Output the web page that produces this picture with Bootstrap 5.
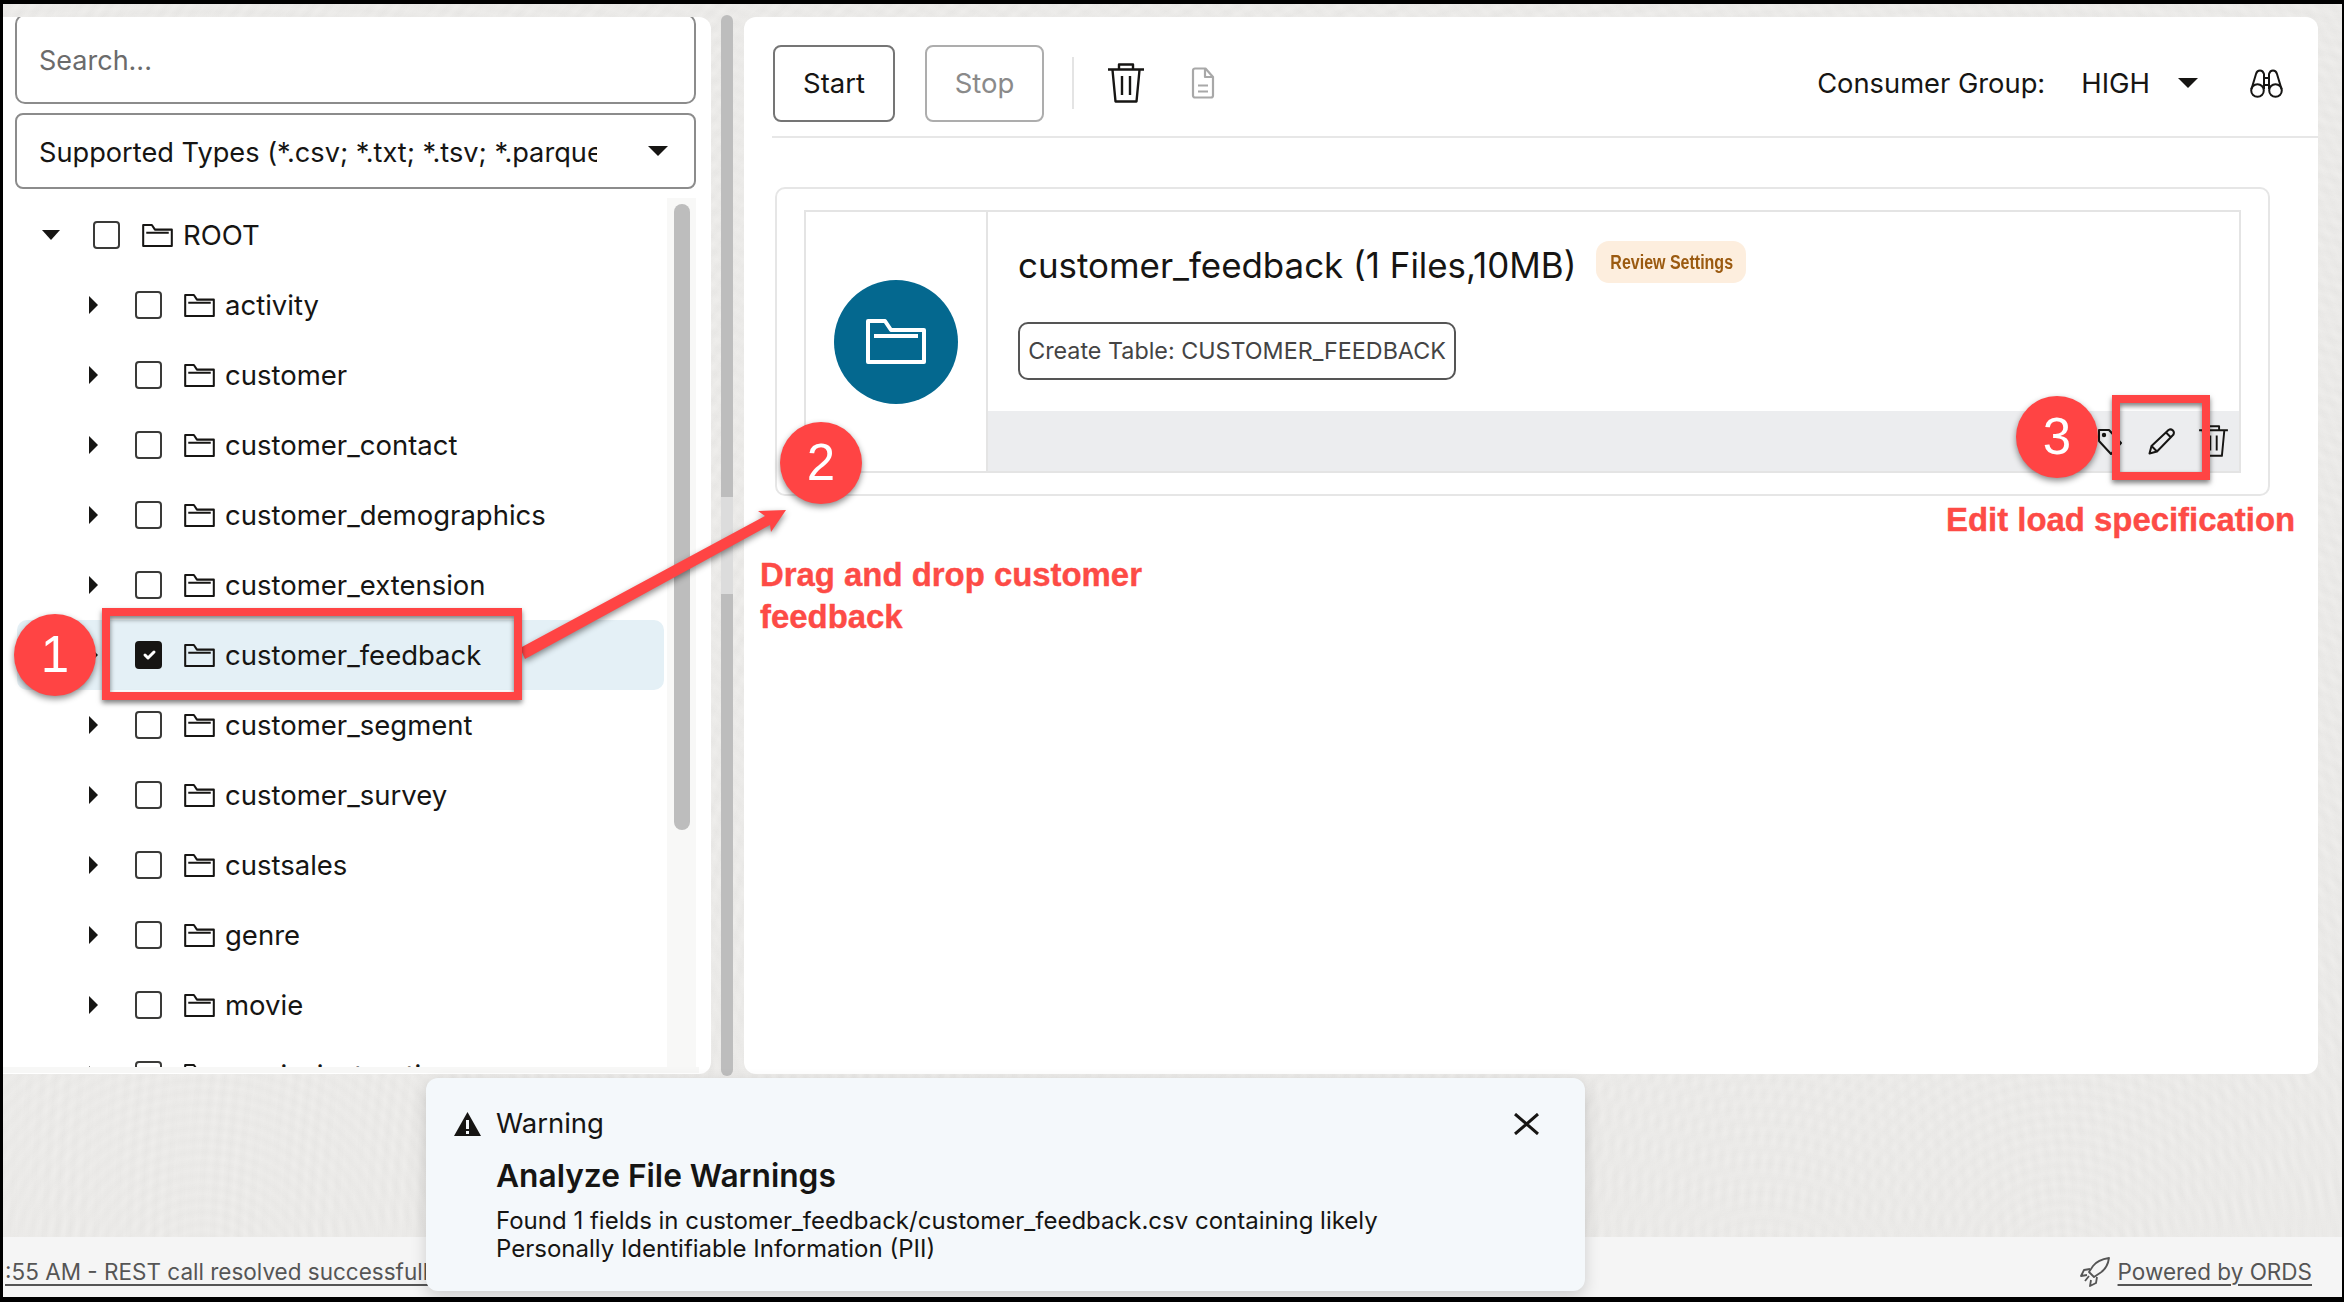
<!DOCTYPE html>
<html lang="en">
<head>
<meta charset="utf-8">
<title>Data Load</title>
<link href="https://cdn.jsdelivr.net/npm/bootstrap@5.3.0/dist/css/bootstrap.min.css" rel="stylesheet">
<style>
html,body{margin:0;background:#000}
body{position:relative;width:2344px;height:1302px;overflow:hidden;font-family:Inter,"Liberation Sans",sans-serif;color:#161513}
.app-frame{margin:4px 2px 0 3px;height:1293px;overflow:hidden;background-color:#eeedeb;
 background-image:
 repeating-radial-gradient(circle at 2059px 1270px,rgba(0,0,0,.012),rgba(0,0,0,0) 6px,rgba(0,0,0,.012) 12px),
 repeating-radial-gradient(circle at 1760px 1300px,rgba(0,0,0,.008),rgba(0,0,0,0) 7px,rgba(0,0,0,.008) 14px),
 repeating-radial-gradient(circle at 200px 1280px,rgba(0,0,0,.01),rgba(0,0,0,0) 6px,rgba(0,0,0,.01) 12px)}
.work-row{height:1070px;padding:13px 24px 0 0}
.left-pane{width:708px;background:#fff;border-radius:0 12px 12px 0;overflow:hidden;padding-left:12px}
.search-box.form-control{height:90px;margin-top:-3px;margin-right:15px;width:681px;border:2px solid #8c8c8c;border-radius:10px;font-size:27px;padding:2px 22px 0;color:#161513;font-family:inherit}
.search-box::placeholder{color:#6b6b6b}
.type-box.form-select{height:76px;width:681px;margin-top:9px;border:2px solid #8c8c8c;border-radius:8px;background-image:none;font-size:27.2px;padding:0 26px 0 22px;color:#161513}
.type-text{width:558px;overflow:hidden;white-space:nowrap;padding-top:5px}
.tree-wrap{height:869px;margin-top:9px;width:681px}
.tree-list{width:652px;padding-top:2px;overflow:hidden}
.tree-row{height:70px;margin:0 3px 0 2px;padding-left:72px;font-size:27.5px;border-radius:10px;white-space:nowrap}
.tree-row.is-root{padding-left:25px}
.tree-row.is-on{background:#e4f0f6}
.caret-cell{width:46px;flex:none}
.is-root .caret-cell{width:51px}
.tree-check.form-check-input{width:27px;height:28px;margin:0 22px 0 0;flex:none;border:2px solid #3a3a38;border-radius:4px;background-color:#fff}
.tree-check.form-check-input:checked{background-color:#161513;border-color:#161513;background-size:85%;opacity:1}
.folder-sm{width:31px;height:23px;margin-right:10px;flex:none}
.tree-label{padding-top:2px}
.tree-track{width:29px;background:#f8f8f7;padding:6px 6px 0 7px}
.tree-thumb{height:626px;background:#bdbdbd;border-radius:8px}
.pane-band{height:6px;width:696px;margin-left:-12px;background:#f7f7f6}
.split-col{width:33px;margin:-2px 0 -3px;padding-left:10px}
.split-seg{width:12px;background:#bdbdbd}
.split-a{height:482px;border-radius:6px 6px 0 0}
.split-b{height:97px;background:#dcdcdc}
.split-c{height:482px;border-radius:0 0 6px 6px}
.right-pane{width:1574px;background:#fff;border-radius:12px;padding-left:28px}
.tool-strip{height:121px;padding:28px 35px 15px 1px;border-bottom:2px solid #e7e7e7}
.tool-btn.btn{height:77px;border:2px solid #757575;border-radius:8px;background:#fff;font-size:27.5px;color:#161513;padding:2px 0 0;width:122px}
.tool-btn.btn:disabled{color:#8a8a8a;border-color:#adadad;opacity:1;width:119px;margin-left:30px}
.tool-sep{width:2px;height:52px;background:#e4e4e4;margin:0 34px 0 28px}
.icon-bin{width:36px;height:40px;margin-right:47px}
.icon-doc{width:24px;height:32px;color:#a8a8a8}
.group-label{font-size:27.3px;margin-right:36px;padding-top:2px}
.group-val{font-size:27.5px;margin-right:28px;padding-top:2px}
.group-caret{width:20px;height:10px;margin-right:52px}
.icon-bino{width:33px;height:29px}
.job-card.card{margin:49px 0 0 3px;width:1495px;height:309px;border:2px solid #e6e6e6;border-radius:10px;padding:21px 27px}
.job-inner{height:263px;border:2px solid #e4e4e4}
.job-side{width:182px;border-right:2px solid #e4e4e4;flex:none}
.job-disc{width:124px;height:124px;background:#04688f;border-radius:50%;color:#fff}
.job-disc svg{width:60px;height:45px}
.job-main{min-width:0}
.job-body{height:199px;padding:29px 0 0 30px}
.title-row{height:42px}
.job-title{font-size:34.9px;margin:0;padding-top:3px;font-weight:400;line-height:42px;white-space:nowrap}
.rev-tag{margin-left:20px;width:150px;height:42px;flex:none;background:#fdeede;border-radius:13px;color:#9b5a10;font:700 20px "Liberation Sans",sans-serif;white-space:nowrap}
.rev-tag span{display:inline-block;transform:scaleX(.8)}
.table-btn.btn{margin-top:39px;height:58px;width:438px;border:2px solid #555;border-radius:10px;background:#fff;color:#444;font-size:23.3px;padding:0;white-space:nowrap}
.job-foot{height:60px;background:#ecedef;padding-right:11px}
.i-tag{width:24px;height:27px;margin-right:26px}
.i-pen{width:28px;height:28px;margin-right:23px}
.i-bin{width:29px;height:32px}
.foot-space{height:163px}
.status-bar{height:60px;background:#f5f5f5;padding:10px 30px 0 2px;color:#555;font-size:22.5px}
.status-bar u{text-underline-offset:4px}
.i-rocket{width:30px;height:30px;margin-right:8px}
.warn-toast.toast{--bs-toast-max-width:none;position:absolute;left:426px;top:1078px;width:1159px;height:213px;background:#f4f8fb;border:0;border-radius:12px;box-shadow:0 6px 16px rgba(0,0,0,.16);padding:29px 46px 0 28px;font-size:24px;z-index:5}
.warn-head{height:34px;font-size:27.5px}
.warn-head .i-warn{width:27px;height:24px;margin-right:15px}
.i-close{width:25px;height:22px}
.warn-body{padding-left:42px}
.warn-title{font-size:31.7px;font-weight:600;margin:17px 0 13px;line-height:36px}
.warn-text{line-height:27.5px;margin:0;width:940px}
.mark-disc{position:absolute;width:82px;height:82px;border-radius:50%;background:#ff4444;color:#fff;font:400 51px/82px "Liberation Sans",sans-serif;text-align:center;box-shadow:0 3px 6px rgba(0,0,0,.45);z-index:7}
.mark-box{position:absolute;border:8px solid #ff4444;box-shadow:0 3px 5px rgba(0,0,0,.5),inset 0 3px 5px rgba(0,0,0,.5);z-index:6}
.mark-text{position:absolute;margin:0;color:#fd4b46;font:700 32.9px/42px "Liberation Sans",sans-serif;-webkit-text-stroke:.4px #fd4b46;z-index:7}
.mark-svg{position:absolute;left:0;top:0;z-index:6;filter:drop-shadow(0 3px 3px rgba(0,0,0,.45))}
.m-one{left:14px;top:614px}
.m-two{left:780px;top:422px}
.m-three{left:2016px;top:396px}
.b-one{left:102px;top:608px;width:420px;height:92px}
.b-three{left:2112px;top:395px;width:98px;height:85px}
.t-drag{left:760px;top:554px}
.t-edit{left:1946px;top:499px}
</style>
</head>
<body>
<svg width="0" height="0" class="d-block position-absolute">
 <symbol id="s-folder" viewBox="0 0 60 45"><path d="M2 2h17l6 9h33v32H2z M8 17H52" fill="none" stroke="currentColor" stroke-width="4" stroke-linejoin="round"/></symbol>
 <symbol id="s-bin" viewBox="0 0 36 40"><path d="M0 6.5H36M11 6V1.5H25V6M4.5 7 7.5 38.5H28.5L31.5 7M14 13V32M22 13V32" fill="none" stroke="currentColor" stroke-width="2.4" stroke-linejoin="round"/></symbol>
 <symbol id="s-right" viewBox="0 0 9 18"><path d="M0 0 9 9 0 18z" fill="#161513"/></symbol>
</svg>

<div class="app-frame d-flex flex-column">
 <div class="work-row d-flex">
  <div class="left-pane d-flex flex-column">
   <input class="search-box form-control" placeholder="Search...">
   <div class="type-box form-select d-flex align-items-center justify-content-between">
    <span class="type-text">Supported Types (*.csv; *.txt; *.tsv; *.parquet)</span>
    <svg width="20" height="10" viewBox="0 0 20 10"><path d="M0 0H20L10 10z" fill="#161513"/></svg>
   </div>
   <div class="tree-wrap d-flex">
    <div class="tree-list">
     <div class="tree-row is-root d-flex align-items-center"><span class="caret-cell"><svg class="d-block" width="18" height="10" viewBox="0 0 18 10"><path d="M0 0H18L9 10z" fill="#161513"/></svg></span><input class="tree-check form-check-input" type="checkbox" aria-label="ROOT"><svg class="folder-sm"><use href="#s-folder"/></svg><span class="tree-label">ROOT</span></div>
     <div class="tree-row d-flex align-items-center"><span class="caret-cell"><svg class="d-block" width="9" height="18"><use href="#s-right"/></svg></span><input class="tree-check form-check-input" type="checkbox" aria-label="activity"><svg class="folder-sm"><use href="#s-folder"/></svg><span class="tree-label">activity</span></div>
     <div class="tree-row d-flex align-items-center"><span class="caret-cell"><svg class="d-block" width="9" height="18"><use href="#s-right"/></svg></span><input class="tree-check form-check-input" type="checkbox" aria-label="customer"><svg class="folder-sm"><use href="#s-folder"/></svg><span class="tree-label">customer</span></div>
     <div class="tree-row d-flex align-items-center"><span class="caret-cell"><svg class="d-block" width="9" height="18"><use href="#s-right"/></svg></span><input class="tree-check form-check-input" type="checkbox" aria-label="customer_contact"><svg class="folder-sm"><use href="#s-folder"/></svg><span class="tree-label">customer_contact</span></div>
     <div class="tree-row d-flex align-items-center"><span class="caret-cell"><svg class="d-block" width="9" height="18"><use href="#s-right"/></svg></span><input class="tree-check form-check-input" type="checkbox" aria-label="customer_demographics"><svg class="folder-sm"><use href="#s-folder"/></svg><span class="tree-label">customer_demographics</span></div>
     <div class="tree-row d-flex align-items-center"><span class="caret-cell"><svg class="d-block" width="9" height="18"><use href="#s-right"/></svg></span><input class="tree-check form-check-input" type="checkbox" aria-label="customer_extension"><svg class="folder-sm"><use href="#s-folder"/></svg><span class="tree-label">customer_extension</span></div>
     <div class="tree-row is-on d-flex align-items-center"><span class="caret-cell"><svg class="d-block" width="9" height="18"><use href="#s-right"/></svg></span><input class="tree-check form-check-input" type="checkbox" checked aria-label="customer_feedback"><svg class="folder-sm"><use href="#s-folder"/></svg><span class="tree-label">customer_feedback</span></div>
     <div class="tree-row d-flex align-items-center"><span class="caret-cell"><svg class="d-block" width="9" height="18"><use href="#s-right"/></svg></span><input class="tree-check form-check-input" type="checkbox" aria-label="customer_segment"><svg class="folder-sm"><use href="#s-folder"/></svg><span class="tree-label">customer_segment</span></div>
     <div class="tree-row d-flex align-items-center"><span class="caret-cell"><svg class="d-block" width="9" height="18"><use href="#s-right"/></svg></span><input class="tree-check form-check-input" type="checkbox" aria-label="customer_survey"><svg class="folder-sm"><use href="#s-folder"/></svg><span class="tree-label">customer_survey</span></div>
     <div class="tree-row d-flex align-items-center"><span class="caret-cell"><svg class="d-block" width="9" height="18"><use href="#s-right"/></svg></span><input class="tree-check form-check-input" type="checkbox" aria-label="custsales"><svg class="folder-sm"><use href="#s-folder"/></svg><span class="tree-label">custsales</span></div>
     <div class="tree-row d-flex align-items-center"><span class="caret-cell"><svg class="d-block" width="9" height="18"><use href="#s-right"/></svg></span><input class="tree-check form-check-input" type="checkbox" aria-label="genre"><svg class="folder-sm"><use href="#s-folder"/></svg><span class="tree-label">genre</span></div>
     <div class="tree-row d-flex align-items-center"><span class="caret-cell"><svg class="d-block" width="9" height="18"><use href="#s-right"/></svg></span><input class="tree-check form-check-input" type="checkbox" aria-label="movie"><svg class="folder-sm"><use href="#s-folder"/></svg><span class="tree-label">movie</span></div>
     <div class="tree-row d-flex align-items-center"><span class="caret-cell"><svg class="d-block" width="9" height="18"><use href="#s-right"/></svg></span><input class="tree-check form-check-input" type="checkbox" aria-label="movie_instructions"><svg class="folder-sm"><use href="#s-folder"/></svg><span class="tree-label">movie_instructions</span></div>
    </div>
    <div class="tree-track"><div class="tree-thumb"></div></div>
   </div>
   <div class="pane-band"></div>
  </div>
  <div class="split-col">
   <div class="split-seg split-a"></div><div class="split-seg split-b"></div><div class="split-seg split-c"></div>
  </div>
  <div class="right-pane">
   <div class="tool-strip d-flex align-items-center">
    <button class="tool-btn btn" type="button">Start</button>
    <button class="tool-btn btn" type="button" disabled>Stop</button>
    <span class="tool-sep"></span>
    <svg class="icon-bin"><use href="#s-bin"/></svg>
    <svg class="icon-doc" viewBox="0 0 24 32" fill="none" stroke="currentColor" stroke-width="2.2" stroke-linejoin="round"><path d="M2 3.5a2 2 0 0 1 2-2H14.5L22 10V28.5a2 2 0 0 1-2 2H4a2 2 0 0 1-2-2zM14 2V10H22M7 18.5H17M7 24.5H17"/></svg>
    <span class="group-label ms-auto">Consumer Group:</span>
    <span class="group-val">HIGH</span>
    <svg class="group-caret" viewBox="0 0 20 10"><path d="M0 0H20L10 10z" fill="#161513"/></svg>
    <svg class="icon-bino" viewBox="0 0 33 29" fill="none" stroke="#161513" stroke-width="2" stroke-linejoin="round"><circle cx="7.5" cy="21.5" r="6.3"/><circle cx="25.5" cy="21.5" r="6.3"/><path d="M1.5 20 6 5Q7 1.5 10 1.5T14 5V20M31.5 20 27 5Q26 1.5 23 1.5T19 5V20M14 9H19M14 16H19"/></svg>
   </div>
   <div class="job-card card">
    <div class="job-inner d-flex">
     <div class="job-side d-flex align-items-center justify-content-center">
      <div class="job-disc d-flex align-items-center justify-content-center"><svg><use href="#s-folder"/></svg></div>
     </div>
     <div class="job-main flex-grow-1">
      <div class="job-body">
       <div class="title-row d-flex align-items-start">
        <h2 class="job-title">customer_feedback (1 Files,10MB)</h2>
        <span class="rev-tag d-flex align-items-center justify-content-center"><span>Review Settings</span></span>
       </div>
       <button class="table-btn btn" type="button">Create Table: CUSTOMER_FEEDBACK</button>
      </div>
      <div class="job-foot d-flex align-items-center justify-content-end">
       <svg class="i-tag" viewBox="0 0 24 27" fill="none" stroke="#161513" stroke-width="2" stroke-linejoin="round"><path d="M1 2H11L23 15 13 26 1 13z"/><circle cx="6" cy="7" r="1.2" fill="#161513"/></svg>
       <svg class="i-pen" viewBox="0 0 28 28" fill="none" stroke="#161513" stroke-width="2" stroke-linejoin="round"><path d="M1.5 26.5 3.5 19 20.5 3a3.5 3.5 0 0 1 5 4.5L9 24.5zM3.5 19 9 24.5M18 5.5 23 10.5"/></svg>
       <svg class="i-bin"><use href="#s-bin"/></svg>
      </div>
     </div>
    </div>
   </div>
  </div>
 </div>
 <div class="foot-space"></div>
 <div class="status-bar d-flex align-items-center justify-content-between">
  <u>:55 AM - REST call resolved successfully</u>
  <span class="d-flex align-items-center">
   <svg class="i-rocket" viewBox="0 0 30 30" fill="none" stroke="#555" stroke-width="1.8" stroke-linejoin="round"><path d="M29 1C22 2 16 5 13 9L9 15 14 20 20 16C25 13 28 8 29 1zM10 12 4 13 1 19 7 18M17 20 16 26 10 29 11 23M9 19 5 24"/></svg>
   <u>Powered by ORDS</u>
  </span>
 </div>
</div>

<div class="warn-toast toast show" role="alert">
 <div class="warn-head d-flex align-items-center">
  <svg class="i-warn" viewBox="0 0 27 24"><path fill-rule="evenodd" d="M13.5 0 27 24H0zM12 8v9h3V8zM12 19v3h3v-3z" fill="#161513"/></svg>
  <span>Warning</span>
  <svg class="i-close ms-auto" viewBox="0 0 25 22"><path d="M1 1 24 21M24 1 1 21" stroke="#161513" stroke-width="3" fill="none"/></svg>
 </div>
 <div class="warn-body">
  <h3 class="warn-title">Analyze File Warnings</h3>
  <p class="warn-text">Found 1 fields in customer_feedback/customer_feedback.csv containing likely Personally Identifiable Information (PII)</p>
 </div>
</div>

<svg class="mark-svg" width="2344" height="1302" viewBox="0 0 2344 1302"><path d="M520 648 765 516 758 511 786 510 771 532 770 525 525 659z" fill="#ff4444"/></svg>
<div class="mark-box b-one"></div>
<div class="mark-box b-three"></div>
<div class="mark-disc m-one">1</div>
<div class="mark-disc m-two">2</div>
<div class="mark-disc m-three">3</div>
<p class="mark-text t-drag">Drag and drop customer<br>feedback</p>
<p class="mark-text t-edit">Edit load specification</p>
</body>
</html>
